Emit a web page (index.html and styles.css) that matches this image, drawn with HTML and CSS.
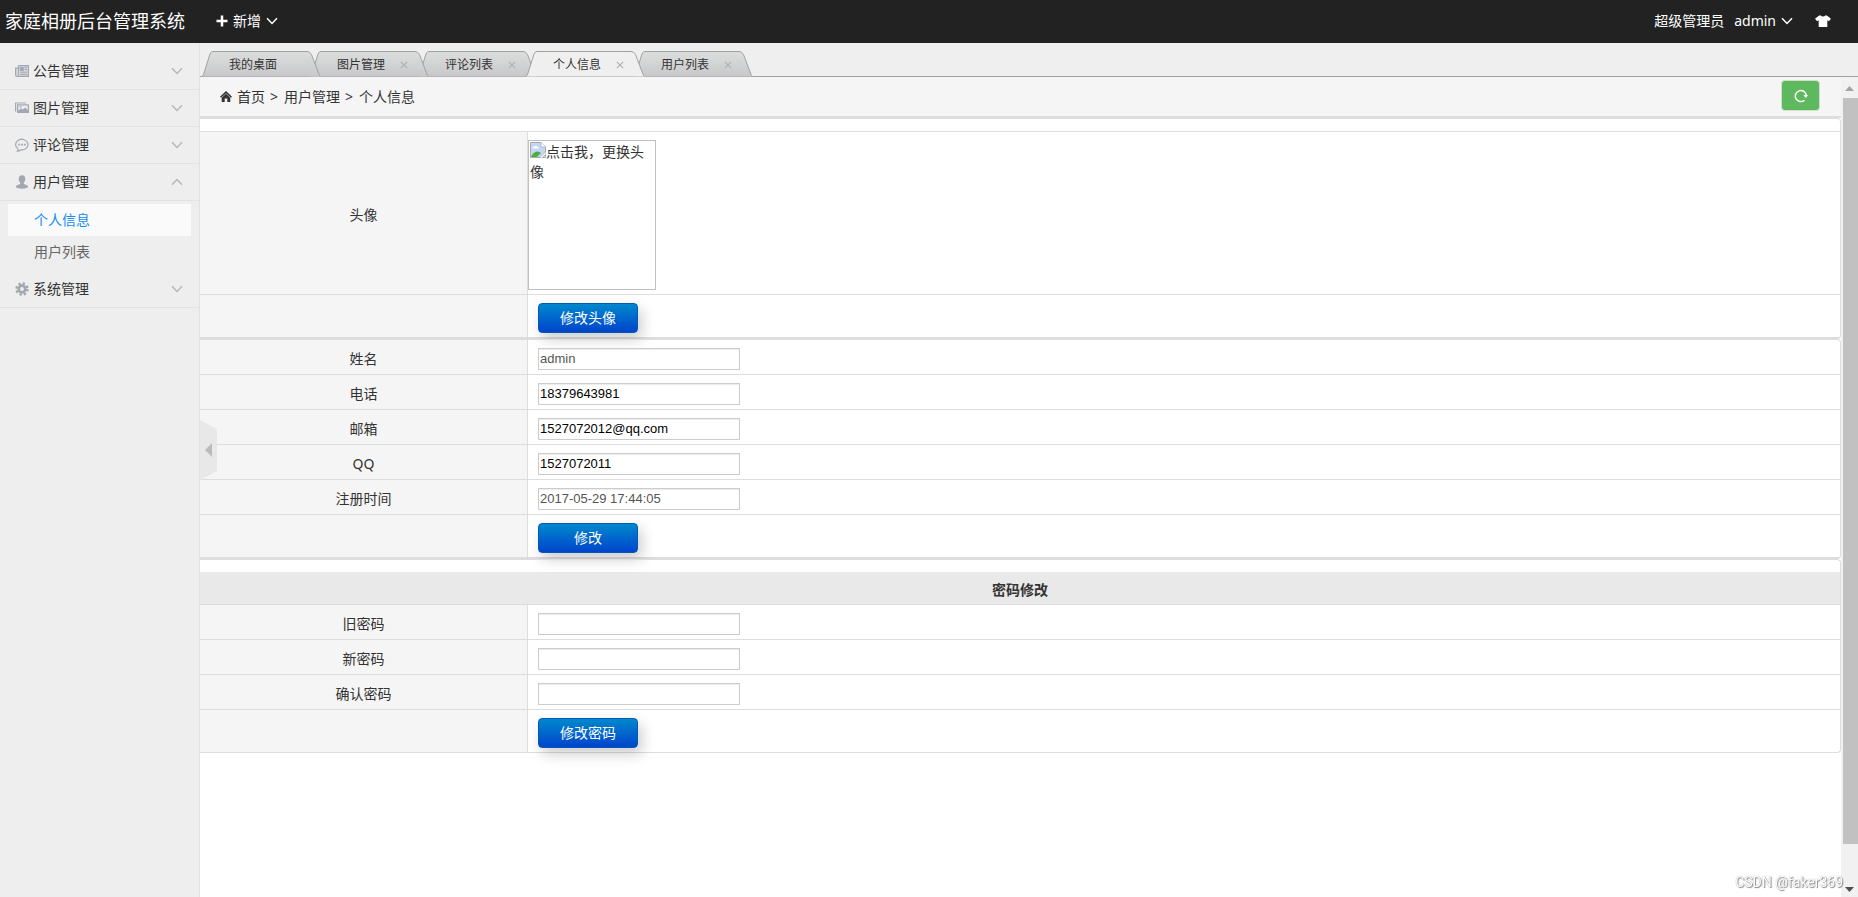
FILE: index.html
```html
<!DOCTYPE html>
<html lang="zh-CN">
<head>
<meta charset="utf-8">
<title>家庭相册后台管理系统</title>
<link rel="stylesheet" href="styles.css">
</head>
<body>
<svg class="defs" aria-hidden="true">
  <defs>
    <linearGradient id="tab-fill" x1="0" y1="0" x2="0" y2="1"><stop offset="0" stop-color="#dcdedd"/><stop offset="1" stop-color="#c8c8ca"/></linearGradient>
    <symbol id="chevron" viewBox="0 0 12 8"><path d="M1 1.2 6 6.4 11 1.2" fill="none" stroke="currentColor" stroke-width="1.5"/></symbol>
    <symbol id="cross" viewBox="0 0 8 8"><path d="M.8.8l6.4 6.4M7.2.8.8 7.2" fill="none" stroke="currentColor" stroke-width="1.2"/></symbol>
    <symbol id="tab-shape" viewBox="0 0 120 26"><path d="M.5 25.5C2 25 2.500 23.500 3 22L9 3Q10 .5 12 .5H106Q109 .5 110.500 3.500L117.500 22Q118.500 25 119.500 25.500" stroke="#a0a2a1"/></symbol>
  </defs>
</svg>

<header class="topbar">
  <a class="brand" href="#">家庭相册后台管理系统</a>
  <button class="top-btn add" type="button">
    <svg class="plus" viewBox="0 0 12 12"><path d="M6 .5v11M.5 6h11" stroke="currentColor" stroke-width="2.500"/></svg>
    新增
    <svg class="chev"><use href="#chevron"/></svg>
  </button>
  <div class="account">
    <span>超级管理员</span>
    <button class="top-btn user" type="button">admin <svg class="chev"><use href="#chevron"/></svg></button>
    <button class="top-btn skin" type="button" aria-label="换肤">
      <svg class="shirt" viewBox="0 0 16 12"><path fill="currentColor" d="M5.300.3Q8 2.800 10.700.3L12.200.7 16 3.800 13.900 6.300 12.300 5.300V12H3.700V5.300L2.100 6.300 0 3.800 3.800.7Z"/></svg>
    </button>
  </div>
</header>

<div class="shell">
  <aside class="sidebar">
    <button class="menu-item" type="button">
      <svg class="menu-icon" viewBox="0 0 14 14"><path d="M3.500 1.600h9.900v10.800H2Q.6 12.400.6 11V4.200h2.900V1.600" fill="currentColor" fill-opacity=".3" stroke="currentColor" stroke-width="1.200"/><path d="M3.500 4v7.500" stroke="currentColor"/><path d="M5.300 3.500h3v3h-3zM9.500 3.500H12M9.500 5.500H12M5.300 8.200H12M5.300 10.300H12" fill="currentColor" stroke="currentColor"/></svg>
      <span>公告管理</span><svg class="chev"><use href="#chevron"/></svg>
    </button>
    <button class="menu-item" type="button">
      <svg class="menu-icon" viewBox="0 0 14 14"><path d="M.6 10.500V2H11" fill="none" stroke="currentColor" stroke-width="1.200"/><path fill="currentColor" fill-rule="evenodd" d="M2 3.200h12V12H2ZM3.300 4.500v5.300L6 7.300l1.500 1.200 2.800-2 2.400 2.500V4.500ZM4.800 5h1.500v1.500H4.800Z"/></svg>
      <span>图片管理</span><svg class="chev"><use href="#chevron"/></svg>
    </button>
    <button class="menu-item" type="button">
      <svg class="menu-icon" viewBox="0 0 14 14"><path d="M2.800 10.600A6.200 5.300 0 1 1 6 11.800Q4.500 13.200 2.500 13.200 3.300 12 2.800 10.600Z" fill="none" stroke="currentColor" stroke-width="1.200"/><path d="M3.300 5.700h1.800v1.800H3.300zM6.100 5.700h1.800v1.800H6.100zM8.900 5.700h1.800v1.800H8.900z" fill="currentColor"/></svg>
      <span>评论管理</span><svg class="chev"><use href="#chevron"/></svg>
    </button>
    <button class="menu-item" type="button" aria-expanded="true">
      <svg class="menu-icon" viewBox="0 0 14 14"><path fill="currentColor" d="M7 .3C9.200.3 10.400 1.700 10.300 4 10.200 5.800 9.500 7 8.800 7.600V9L12 10.200Q13 10.800 13 12.500 10 13.800 7 13.800T1 12.500Q1 10.800 2 10.200L5.200 9V7.600C4.500 7 3.800 5.800 3.700 4 3.600 1.700 4.800.3 7 .3Z"/></svg>
      <span>用户管理</span><svg class="chev up"><use href="#chevron"/></svg>
    </button>
    <nav class="submenu">
      <a class="sub-link current" href="#">个人信息</a>
      <a class="sub-link" href="#">用户列表</a>
    </nav>
    <button class="menu-item" type="button">
      <svg class="menu-icon" viewBox="0 0 14 14"><circle cx="7" cy="7" r="3.300" fill="none" stroke="currentColor" stroke-width="2.800"/><circle cx="7" cy="7" r="5.500" fill="none" stroke="currentColor" stroke-width="2.500" stroke-dasharray="2.320 2"/></svg>
      <span>系统管理</span><svg class="chev"><use href="#chevron"/></svg>
    </button>
  </aside>

  <main class="main">
    <button class="collapse" type="button" aria-label="收起菜单"></button>
    <nav class="tabs">
      <div class="tab"><svg class="shape"><use href="#tab-shape"/></svg><a href="#">我的桌面</a></div>
      <div class="tab"><svg class="shape"><use href="#tab-shape"/></svg><a href="#">图片管理</a><button type="button" aria-label="关闭"><svg class="cross"><use href="#cross"/></svg></button></div>
      <div class="tab"><svg class="shape"><use href="#tab-shape"/></svg><a href="#">评论列表</a><button type="button" aria-label="关闭"><svg class="cross"><use href="#cross"/></svg></button></div>
      <div class="tab active"><svg class="shape"><use href="#tab-shape"/></svg><a href="#">个人信息</a><button type="button" aria-label="关闭"><svg class="cross"><use href="#cross"/></svg></button></div>
      <div class="tab"><svg class="shape"><use href="#tab-shape"/></svg><a href="#">用户列表</a><button type="button" aria-label="关闭"><svg class="cross"><use href="#cross"/></svg></button></div>
    </nav>

    <div class="frame">
      <div class="page">
        <div class="crumbs">
          <svg class="home" viewBox="0 0 12 11"><path fill="currentColor" d="M6 0 12 5.700 11 6.800 6 2.200 1 6.800 0 5.700ZM6 2.800 10.300 6.800V11H7.300V7.500H4.700V11H1.700V6.800Z"/></svg>
          <a href="#">首页</a><span>&gt;</span><span>用户管理</span><span>&gt;</span><span>个人信息</span>
          <button class="refresh" type="button" aria-label="刷新"><svg viewBox="0 0 14 14"><path d="M10.500 11.200A5.500 5.500 0 1 1 12.300 6.500" fill="none" stroke="currentColor" stroke-width="1.500"/><path d="M9.300 6h4.700l-2.200 3Z" fill="currentColor"/></svg></button>
        </div>

        <form class="panel spaced">
          <table class="sheet ruled">
            <tr><th>头像</th><td class="flush"><div class="avatar" role="img" aria-label="点击我，更换头像"><svg class="broken" viewBox="0 0 16 16"><path d="M.5.500h10.500L15.500 5v10.500H.5Z" fill="#c3d7f7" stroke="#a9a9a9"/><path d="M2.500 6.500q0-2 2-2 1-1.500 2.500 0 2 0 1.500 2Z" fill="#fff"/><path d="M1 15Q3 10 7 9.500q3 0 4 1.500L7 15Z" fill="#52ad3c"/><path d="M16 9.500 9.500 16H12L16 12ZM11 .5V5h4.500" fill="#fff" stroke="#a9a9a9" stroke-width=".7"/></svg>点击我，更换头像</div></td></tr>
            <tr><th></th><td><button class="submit" type="button">修改头像</button></td></tr>
          </table>
        </form>
        <form class="panel">
          <table class="sheet">
            <tr><th><label for="name">姓名</label></th><td><input id="name" class="field locked" type="text" value="admin" readonly></td></tr>
            <tr><th><label for="phone">电话</label></th><td><input id="phone" class="field" type="text" value="18379643981"></td></tr>
            <tr><th><label for="mail">邮箱</label></th><td><input id="mail" class="field" type="text" value="1527072012@qq.com"></td></tr>
            <tr><th><label for="qq">QQ</label></th><td><input id="qq" class="field" type="text" value="1527072011"></td></tr>
            <tr><th><label for="joined">注册时间</label></th><td><input id="joined" class="field locked" type="text" value="2017-05-29 17:44:05" readonly></td></tr>
            <tr><th></th><td><button class="submit" type="button">修改</button></td></tr>
          </table>
        </form>
        <form class="panel spaced last">
          <table class="sheet">
            <colgroup><col class="label-col"><col class="value-col"></colgroup>
            <tr><th class="title" colspan="2">密码修改</th></tr>
            <tr><th><label for="old">旧密码</label></th><td><input id="old" class="field" type="password"></td></tr>
            <tr><th><label for="new">新密码</label></th><td><input id="new" class="field" type="password"></td></tr>
            <tr><th><label for="again">确认密码</label></th><td><input id="again" class="field" type="password"></td></tr>
            <tr><th></th><td><button class="submit" type="button">修改密码</button></td></tr>
          </table>
        </form>
      </div>
      <div class="scrollbar" aria-hidden="true">
        <svg class="arrow" viewBox="0 0 17 21"><path d="M4 14h9L8.500 9Z" fill="#a3a3a3"/></svg>
        <div class="thumb"></div>
        <svg class="arrow" viewBox="0 0 17 21"><path d="M4 11h9L8.500 16Z" fill="#505050"/></svg>
      </div>
    </div>
  </main>
</div>
<div class="watermark">CSDN @faker369</div>
</body>
</html>
```

FILE: styles.css
```css
* { box-sizing: border-box; }
body {
  margin: 0;
  height: 100vh;
  display: flex;
  flex-direction: column;
  overflow: hidden;
  font: 14px/20px "Noto Sans", "Noto Sans CJK SC", sans-serif;
  color: #333;
  background: #fff;
}
a { color: inherit; text-decoration: none; }
button {
  font: inherit;
  color: inherit;
  border: 0;
  padding: 0;
  background: none;
  cursor: pointer;
}
svg { display: block; flex: none; }
.defs { position: absolute; width: 0; height: 0; }
.chev { width: 12px; height: 8px; }

.topbar {
  flex: none;
  height: 43px;
  display: flex;
  align-items: center;
  padding: 0 27px 2px 5px;
  background: #222;
  color: #fff;
}
.brand { font-size: 18px; }
.top-btn { display: flex; align-items: center; gap: 5px; }
.add { margin-left: 31px; }
.plus { width: 12px; height: 12px; }
.account { margin-left: auto; display: flex; align-items: center; gap: 10px; }
.skin { margin-left: 12px; }
.shirt { width: 16px; height: 12px; }

.shell { flex: 1; display: flex; min-height: 0; }
.sidebar {
  flex: none;
  width: 200px;
  padding-top: 10px;
  background: #eee;
  border-right: 1px solid #e2e2e2;
}
.menu-item {
  display: flex;
  align-items: center;
  gap: 4px;
  width: 100%;
  height: 37px;
  padding: 0 16px 0 15px;
  border-bottom: 1px solid #e2e2e2;
}
.menu-item .chev { margin-left: auto; color: #b8b8b8; }
.up { transform: rotate(180deg); }
.menu-icon { width: 14px; height: 14px; color: #a2a8b1; }
.submenu { padding: 3px 8px; }
.sub-link { display: block; padding: 6px 26px; color: #666; }
.current { background: #fafafa; color: #148cf1; }

.main {
  position: relative;
  flex: 1;
  min-width: 0;
  display: flex;
  flex-direction: column;
}
.collapse {
  position: absolute;
  left: 0;
  top: 377px;
  z-index: 9;
  width: 17px;
  height: 60px;
  background: #e8e8e8;
  clip-path: polygon(0 0, 100% 15%, 100% 85%, 0 100%);
}
.collapse::before {
  content: "";
  position: absolute;
  left: 5px;
  top: 23px;
  border: solid transparent;
  border-width: 7px 7px 7px 0;
  border-right-color: #bbb;
}
.tabs {
  flex: none;
  display: flex;
  height: 34px;
  padding: 8px 1px 0;
  background: #efeff0;
  border-bottom: 1px solid #a0a2a1;
}
.tab {
  position: relative;
  flex: none;
  width: 120px;
  height: 26px;
  margin-right: -12px;
  padding: 2px 21px 0 28px;
  display: flex;
  align-items: center;
  justify-content: space-between;
  font-size: 12px;
}
.tab:nth-child(1) { z-index: 5; }
.tab:nth-child(2) { z-index: 4; }
.tab:nth-child(3) { z-index: 3; }
.tab:nth-child(5) { z-index: 2; }
.tab.active { z-index: 6; }
.shape {
  position: absolute;
  inset: 0;
  z-index: -1;
  width: 120px;
  height: 26px;
  fill: url(#tab-fill);
}
.active .shape { fill: #efefef; }
.cross { width: 8px; height: 8px; color: #aeb2b6; }

.frame { flex: 1; display: flex; min-height: 0; }
.page { flex: 1; min-width: 0; background: #fff; }
.crumbs {
  display: flex;
  align-items: center;
  gap: 5px;
  height: 41px;
  padding: 0 21px 0 20px;
  background: #f5f5f5;
  border-bottom: 2px solid #ddd;
}
.crumbs span:nth-of-type(odd) { padding-right: 1px; }
.home { width: 12px; height: 11px; }
.refresh {
  display: grid;
  place-items: center;
  align-self: flex-start;
  width: 39px;
  height: 31px;
  margin: 3px 0 0 auto;
  border: 1px solid #cfe0cf;
  border-radius: 4px;
  background: #5eb95e;
  color: #fff;
}
.refresh svg { width: 14px; height: 14px; }

.panel {
  border: 1px solid #ddd;
  border-left: 0;
  border-radius: 0 4px 4px 0;
}
.spaced { padding-top: 12px; }
.sheet {
  width: 100%;
  border-spacing: 0;
  table-layout: fixed;
}
.ruled { border-top: 1px solid #ddd; }
.label-col { width: 20%; }
.value-col { width: 80%; }
.sheet th, .sheet td {
  border-bottom: 1px solid #ddd;
  padding: 8px 10px 4px;
  text-align: left;
}
.sheet th {
  width: 20%;
  background: #f5f5f5;
  border-right: 1px solid #ddd;
  font-weight: 400;
  text-align: center;
}
.last tr:last-child > * { border-bottom: 0; }
.sheet .title {
  width: auto;
  background: #e9e9e9;
  border-right: 0;
  font-weight: 700;
}
.sheet .flush { padding-left: 0; }
.avatar {
  width: 128px;
  height: 150px;
  padding: 1px;
  border: 1px solid silver;
}
.broken { width: 16px; height: 16px; display: inline-block; vertical-align: top; }
.field {
  display: block;
  width: 202px;
  height: 22px;
  padding: 0 1px 2px;
  border: 1px solid #ccc;
  box-shadow: inset 0 1px 1px rgba(0, 0, 0, .08);
  background: #fff;
  font: 13px "Liberation Sans", sans-serif;
  color: #000;
}
.locked { color: #555; }
.submit {
  display: block;
  width: 100px;
  height: 30px;
  border: 1px solid #0459b5;
  border-radius: 4px;
  background: linear-gradient(#0088cc, #0044cc);
  box-shadow: 4px 6px 14px rgba(0, 0, 0, .2);
  color: #fff;
}

.scrollbar {
  flex: none;
  width: 17px;
  display: flex;
  flex-direction: column;
  background: #f1f1f1;
}
.arrow { width: 17px; height: 21px; }
.thumb { flex: 0 1 746px; margin-left: 2px; background: #c1c1c1; }
.scrollbar .arrow:last-child { margin-top: auto; }

.watermark {
  position: fixed;
  right: 15px;
  bottom: 5px;
  z-index: 10;
  font-family: Roboto, sans-serif;
  color: #fff;
  text-shadow: 0 0 1px #888, 1px 1px 1px #888;
}
```
